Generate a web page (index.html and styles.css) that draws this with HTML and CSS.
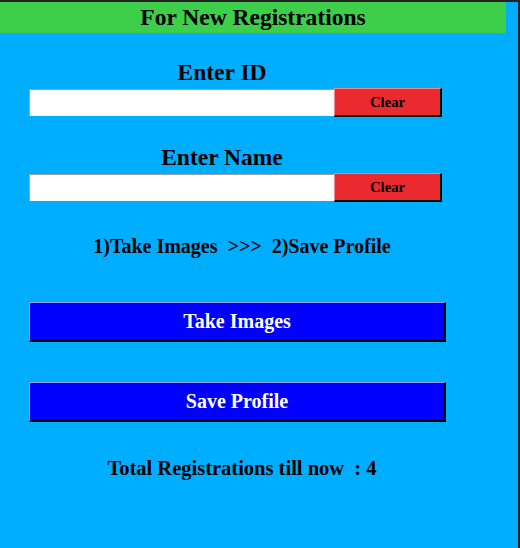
FILE: index.html
```html
<!DOCTYPE html>
<html>
<head>
<meta charset="utf-8">
<link rel="stylesheet" href="styles.css">
</head>
<body>
<div class="frame">
  <div class="header">For New Registrations</div>
  <div class="content">
    <div class="label label-id">Enter ID</div>
    <div class="row">
      <input class="entry" type="text">
      <button class="clear">Clear</button>
    </div>
    <div class="label label-name">Enter Name</div>
    <div class="row">
      <input class="entry" type="text">
      <button class="clear">Clear</button>
    </div>
    <div class="info instr">1)Take Images&nbsp;&nbsp;&gt;&gt;&gt;&nbsp;&nbsp;2)Save Profile</div>
    <button class="action take">Take Images</button>
    <button class="action save">Save Profile</button>
    <div class="info total">Total Registrations till now&nbsp;&nbsp;: 4</div>
  </div>
</div>
</body>
</html>
```

FILE: styles.css
```css
html, body {
  margin: 0;
  padding: 0;
  background: #232323;
  height: 100%;
  overflow: hidden;
}
.frame {
  margin-top: 2px;
  width: 518px;
  height: 546px;
  background: #00aeff;
  font-family: "Liberation Serif", "Times New Roman", serif;
  font-weight: bold;
  color: #000;
}
.header {
  width: 506px;
  height: 31px;
  background: #3ecf4a;
  font-size: 23.5px;
  line-height: 31px;
  text-align: center;
}
.content {
  display: flex;
  flex-direction: column;
  align-items: flex-start;
  padding-left: 29px;
}
.label {
  width: 386px;
  text-align: center;
  font-size: 23.5px;
  line-height: 26px;
}
.label-id { margin-top: 26px; }
.label-name { margin-top: 27px; }
.row {
  display: flex;
  align-items: center;
  margin-top: 3px;
  height: 29px;
}
.entry {
  box-sizing: border-box;
  width: 305px;
  height: 27px;
  margin: 0;
  padding: 0 2px;
  border: none;
  border-top: 1px solid #a0a0a0;
  border-left: 1px solid #a0a0a0;
  background: #fff;
  outline: none;
  font-family: "Liberation Serif", serif;
  font-size: 16px;
}
.clear {
  box-sizing: border-box;
  width: 108px;
  height: 29px;
  margin: 0;
  padding: 0;
  background: #ea2a2f;
  border-top: 1px solid #f58a8c;
  border-left: 1px solid #f58a8c;
  border-right: 2px solid #000;
  border-bottom: 2px solid #000;
  font-family: "Liberation Serif", serif;
  font-weight: bold;
  font-size: 14.67px;
  color: #000;
}
.info {
  width: 426px;
  text-align: center;
  font-size: 20px;
  line-height: 24px;
  white-space: nowrap;
}
.instr { margin-top: 32px; }
.total { margin-top: 34px; font-size: 20.5px; }
.action {
  box-sizing: border-box;
  width: 417px;
  height: 40px;
  margin: 0;
  padding: 0;
  background: #0000ff;
  border-top: 1px solid #9a9aff;
  border-left: 1px solid #9a9aff;
  border-right: 2px solid #000;
  border-bottom: 2px solid #000;
  font-family: "Liberation Serif", serif;
  font-weight: bold;
  font-size: 20px;
  color: #fff;
}
.take { margin-top: 44px; }
.save { margin-top: 40px; }
```
